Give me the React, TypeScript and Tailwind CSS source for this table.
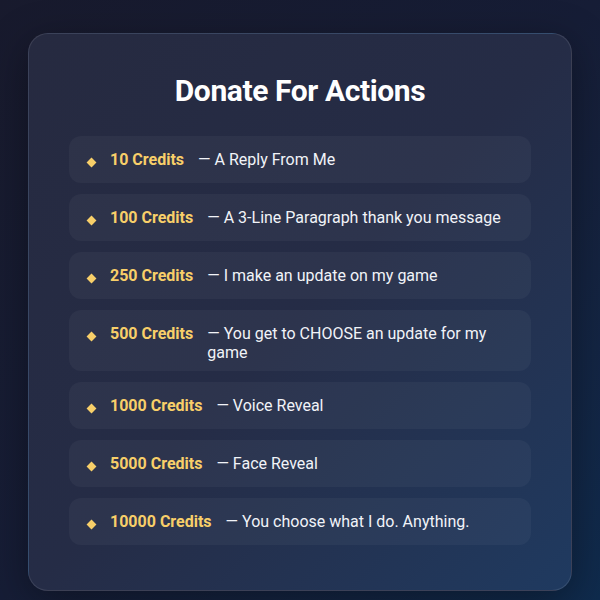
const actions = [
  { credits: "10 Credits", desc: "A Reply From Me" },
  { credits: "100 Credits", desc: "A 3-Line Paragraph thank you message" },
  { credits: "250 Credits", desc: "I make an update on my game" },
  { credits: "500 Credits", desc: "You get to CHOOSE an update for my game" },
  { credits: "1000 Credits", desc: "Voice Reveal" },
  { credits: "5000 Credits", desc: "Face Reveal" },
  { credits: "10000 Credits", desc: "You choose what I do. Anything." },
];

export default function App() {
  return (
    <div
      className="w-[600px] h-[600px] overflow-hidden bg-gradient-to-br from-[#181a2d] via-[#161d36] to-[#0f2b4d] pt-[33px] px-[28px]"
      style={{ fontFamily: "Roboto, 'Noto Sans', sans-serif" }}
    >
      <div className="rounded-[20px] border border-white/10 bg-gradient-to-br from-[#262a40] via-[#252c46] to-[#1f3a60] px-[40px] pt-[40px] pb-[45px] shadow-[0_10px_40px_rgba(0,0,0,0.35)]">
        <h2 className="text-center text-[30px] font-bold leading-[34px] text-white tracking-[-0.4px]">
          Donate For Actions
        </h2>

        <div className="mt-[28px] flex flex-col gap-[11px]">
          {actions.map((a) => (
            <div
              key={a.credits}
              className="flex items-start rounded-[12px] bg-white/[0.04] pl-[18px] pr-[22px] py-[12px] text-[16px]"
            >
              {/* diamond bullet */}
              <div className="mt-[11px] ml-[1px] h-[7px] w-[7px] shrink-0 rotate-45 bg-[#f8cf69]" />
              <span className="ml-[15px] shrink-0 font-bold leading-[23px] text-[#f8cf69]">
                {a.credits}
              </span>
              <span className="ml-[14px] mt-[2px] mb-[-3px] leading-[19px] text-[#f1f3f8]">
                — {a.desc}
              </span>
            </div>
          ))}
        </div>
      </div>
    </div>
  );
}
